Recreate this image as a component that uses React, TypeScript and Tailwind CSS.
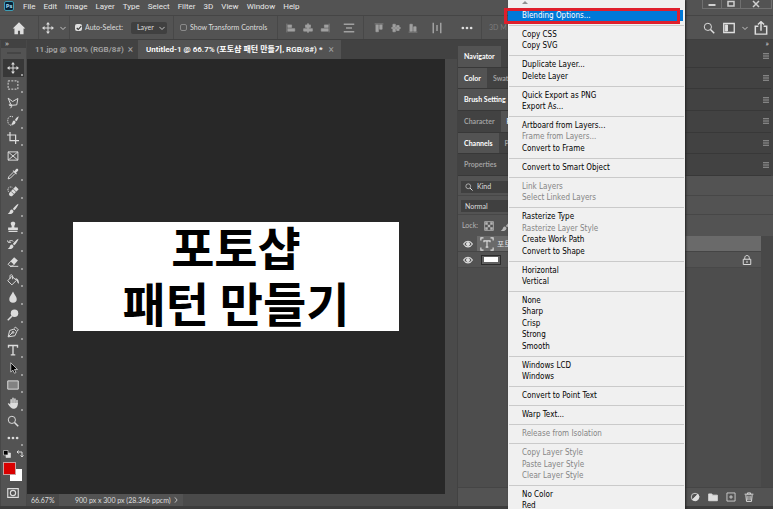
import React from "react";

type IconProps = { children: React.ReactNode; className?: string };

function Icon({ children, className = "size-3.5" }: IconProps) {
  return (
    <svg viewBox="0 0 16 16" className={`shrink-0 ${className}`} fill="none" stroke="currentColor" strokeWidth="1.3" aria-hidden="true">
      {children}
    </svg>
  );
}

const moveShape = (
  <>
    <path d="M8 2v12M2 8h12" />
    <path fill="currentColor" stroke="none" d="M8 0l2.6 3.4H5.4zM8 16l2.6-3.4H5.4zM0 8l3.4-2.6v5.2zM16 8l-3.4-2.6v5.2z" />
  </>
);
const magnifier = (
  <>
    <circle cx="6.5" cy="6.5" r="4.8" />
    <path d="M10 10l5 5" strokeWidth="2" />
  </>
);
const brushShape = (
  <path fill="currentColor" stroke="none" d="M15.4 1c-2.5 1-6 4.3-7.6 6.9l1.9 1.8C12 7.8 14.7 4 15.4 1zM6.900 8.800c-2.600-.2-3 2.300-3.600 3.600-.5 1-1.300 1.500-2.300 1.700 2.600 1.500 7.300.8 7.700-3.400z" />
);
const dots = (
  <g fill="currentColor" stroke="none">
    <circle cx="2.5" cy="8" r="1.8" />
    <circle cx="8" cy="8" r="1.8" />
    <circle cx="13.5" cy="8" r="1.8" />
  </g>
);

type Tool = { name: string; shape: React.ReactNode; more: boolean };

const tools: Tool[] = [
  { name: "Move", more: true, shape: moveShape },
  { name: "Marquee", more: true, shape: <path strokeDasharray="2.6 1.7" d="M1.5 2.5h13v11h-13z" /> },
  { name: "Polygonal Lasso", more: true, shape: <path d="M5 10L1.5 1.5l6 4.500 7-4-1.500 8.500-6 .5-2.500-1.500c-2 0-2.500 2 0 2s2 1.500 0 3.500M7 11l-3 .5" /> },
  {
    name: "Quick Selection", more: true, shape: (
      <>
        <path strokeDasharray="1.5 1" d="M8 2.5C4 .5 1 3 1 7.500S4 15 7.500 13" />
        <path fill="currentColor" stroke="none" d="M15.5 1.5c-2 1-4 3-5 5l1.800 1.800c1.900-1.900 3.200-4.800 3.200-6.800zM9.700 7.300c-2.200.2-2.200 2.200-2.700 3.500L5.500 12.500c2.500 1 6 .2 6-3.500z" />
      </>
    ),
  },
  { name: "Crop", more: true, shape: <path strokeWidth="1.6" d="M4 0v11.500h12M0 4h11.500V16" /> },
  { name: "Frame", more: false, shape: <path d="M1.5 2.5h13v11h-13zM1.5 2.5l13 11M14.5 2.5l-13 11" /> },
  {
    name: "Eyedropper", more: true, shape: (
      <>
        <path d="M8.5 5.500L2.500 11.500 1.500 14.500l3-1 6-6" />
        <path fill="currentColor" stroke="none" d="M7.500 4l1-1 1.400 1.200 2-2.500c2-1.800 4.200.5 2.500 2.400L12 6.300l1.200 1.300-1.100 1z" />
      </>
    ),
  },
  {
    name: "Healing Brush", more: true, shape: (
      <>
        <path strokeDasharray="1.5 1" d="M2 9C0 5 2 1.500 7 3" />
        <path fill="currentColor" stroke="none" d="M11.500 1.500l4 4-8.500 9c-2.500 1.500-5.500-1.500-4-4z" />
        <path className="stroke-[#535353]" strokeWidth="1" d="M8.500 5.500l4 4M5.500 8.500l4 4" />
      </>
    ),
  },
  { name: "Brush", more: true, shape: brushShape },
  { name: "Clone Stamp", more: true, shape: <path fill="currentColor" stroke="none" d="M8 1c3.800 0 3.400 3.200 2 5-.4.7-.4 1.800 0 2.500h4.500V12h-13V8.500H6c.4-.7.4-1.800 0-2.500C4.600 4.200 4.200 1 8 1zM2 13h12v1.800H2z" /> },
  {
    name: "History Brush", more: true, shape: (
      <>
        {brushShape}
        <path d="M2 5.500C4 2.500 6.500 3 8.500 4.500M0 3l2 3 3.500-.5" />
      </>
    ),
  },
  {
    name: "Eraser", more: true, shape: (
      <>
        <path fill="currentColor" stroke="none" d="M9.500 1.500l5 4.500-5 5.500-5-4.500z" />
        <path d="M5 7l-3.500 4 2.500 2.500h3l2.500-2.500M4 13.800h11" />
      </>
    ),
  },
  {
    name: "Paint Bucket", more: true, shape: (
      <>
        <path d="M6.500 3L1 9l5.500 5.500 6-6zM4 6.500V3c0-3 3.500-2.500 3.500 0v4" />
        <path fill="currentColor" stroke="none" d="M11 5.500c3 0 5 2 5 7.500-1.500-.5-2.500-2-2.700-4z" />
      </>
    ),
  },
  { name: "Blur", more: true, shape: <path fill="currentColor" stroke="none" d="M8 .5c1.500 4 5 6.500 5 10A5 5 0 0 1 3 10.500c0-3.500 3.500-6 5-10z" /> },
  {
    name: "Dodge", more: true, shape: (
      <>
        <circle cx="10" cy="5.8" r="5" fill="currentColor" stroke="none" />
        <path strokeWidth="1.9" d="M6.500 9.500L1 15" />
      </>
    ),
  },
  {
    name: "Pen", more: true, shape: (
      <>
        <path d="M1.500 14.500l2-8.500L9.500 4l3.500 3.500-2.500 5.500zM1.500 14.500l6-6M9.500 3l2-1.500 3.500 3.500-1.500 2" />
        <circle cx="8" cy="8.5" r="1.2" />
      </>
    ),
  },
  { name: "Type", more: true, shape: <path strokeWidth="1.8" d="M2 5V2h12v3M8 2v12.500M5 14.500h6" /> },
  { name: "Path Selection", more: true, shape: <path className="fill-black" strokeWidth="1" d="M5 1v12.500l2.700-2.800L10 15l2-1-2-4h4z" /> },
  { name: "Rectangle", more: true, shape: <path className="fill-[#828282]" d="M1 2.500h14v11H1z" /> },
  {
    name: "Hand", more: true, shape: (
      <>
        <path fill="currentColor" stroke="none" d="M4.500 8h10c0 4-1 7-5 7.500-3 .5-5-1.500-8.500-6.500 1-1.500 2-.5 3.500 1z" />
        <path strokeWidth="1.9" strokeLinecap="round" d="M5.500 9V3.500M8 9V1.500M10.600 9V2.500M13.300 9V4.500" />
      </>
    ),
  },
  { name: "Zoom", more: false, shape: magnifier },
  { name: "Edit Toolbar", more: true, shape: dots },
];

const menus = ["File", "Edit", "Image", "Layer", "Type", "Select", "Filter", "3D", "View", "Window", "Help"];

const contextMenu: { label: string; off?: boolean }[][] = [
  [{ label: "Blending Options..." }],
  [{ label: "Copy CSS" }, { label: "Copy SVG" }],
  [{ label: "Duplicate Layer..." }, { label: "Delete Layer" }],
  [{ label: "Quick Export as PNG" }, { label: "Export As..." }],
  [{ label: "Artboard from Layers..." }, { label: "Frame from Layers...", off: true }, { label: "Convert to Frame" }],
  [{ label: "Convert to Smart Object" }],
  [{ label: "Link Layers", off: true }, { label: "Select Linked Layers", off: true }],
  [{ label: "Rasterize Type" }, { label: "Rasterize Layer Style", off: true }, { label: "Create Work Path" }, { label: "Convert to Shape" }],
  [{ label: "Horizontal" }, { label: "Vertical" }],
  [{ label: "None" }, { label: "Sharp" }, { label: "Crisp" }, { label: "Strong" }, { label: "Smooth" }],
  [{ label: "Windows LCD" }, { label: "Windows" }],
  [{ label: "Convert to Point Text" }],
  [{ label: "Warp Text..." }],
  [{ label: "Release from Isolation", off: true }],
  [{ label: "Copy Layer Style", off: true }, { label: "Paste Layer Style", off: true }, { label: "Clear Layer Style", off: true }],
  [{ label: "No Color" }, { label: "Red" }],
];

const panels: { tabs: string[]; active: number }[] = [
  { tabs: ["Navigator"], active: 0 },
  { tabs: ["Color", "Swat"], active: 0 },
  { tabs: ["Brush Setting"], active: 0 },
  { tabs: ["Character", "P"], active: 1 },
  { tabs: ["Channels", "P"], active: 0 },
  { tabs: ["Properties"], active: -1 },
];

const aligns: { name: string; shape: React.ReactNode }[] = [
  { name: "Align left edges", shape: <path d="M1.500 1v14M3 3h6v4H3zM3 9h11v4H3z" /> },
  { name: "Align horizontal centers", shape: <path d="M7.300 1h1.400v14H7.300zM4 3h8v4H4zM1 9h14v4H1z" /> },
  { name: "Align right edges", shape: <path d="M14.500 1v14M7 3h6v4H7zM2 9h11v4H2z" /> },
];
const verticals: { name: string; shape: React.ReactNode }[] = [
  { name: "Align top edges", shape: <path d="M1 1.500h14M3 3v11h4V3zM9 3v7h4V3z" /> },
  { name: "Align vertical centers", shape: <path d="M1 7.300h14v1.400H1zM3 2v12h4V2zM9 4v8h4V4z" /> },
  { name: "Align bottom edges", shape: <path d="M1 14.500h14M3 2v11h4V2zM9 6v7h4V6z" /> },
];

function Chevron() {
  return (
    <Icon className="size-1.5">
      <path d="M1 5l7 7 7-7" strokeWidth="2.2" />
    </Icon>
  );
}

function Rule() {
  return <div className="h-full w-px shrink-0 bg-[#484848]" />;
}

function MenuBar() {
  return (
    <header className="flex h-[15px] shrink-0 items-start bg-[#535353] pl-1">
      <div className="mt-px flex size-2.5 items-center justify-center rounded-xs border border-[#3d9db5] bg-[#062338] text-[6px] font-bold text-[#a5dcf5]">Ps</div>
      <nav className="flex h-[13px] items-center gap-2 pl-[9px] font-['Roboto',sans-serif] text-[#e8e8e8]">
        {menus.map((m) => (
          <button key={m} type="button">{m}</button>
        ))}
      </nav>
      <div className="mr-px ml-auto flex h-[9px] border-b border-l border-[#707070] text-[#d0d0d0]">
        <button type="button" aria-label="Minimize" className="flex w-[19px] items-center justify-center border-r border-[#707070]">
          <Icon className="size-2"><path d="M1 10h14" strokeWidth="4" /></Icon>
        </button>
        <button type="button" aria-label="Restore" className="flex w-[19px] items-center justify-center border-r border-[#707070]">
          <Icon className="size-2"><path d="M2 3h12v9H2z" strokeWidth="3" /></Icon>
        </button>
        <button type="button" aria-label="Close" className="flex w-[31px] items-center justify-center border-r border-[#707070]">
          <Icon className="size-2"><path d="M2 2l12 12M14 2L2 14" strokeWidth="3" /></Icon>
        </button>
      </div>
    </header>
  );
}

function OptionsBar() {
  return (
    <div className="flex h-6 shrink-0 items-center border-t border-[#454545] bg-[#535353] font-['Lato',sans-serif] text-[7px] text-[#dedede]">
      <button type="button" aria-label="Home" className="flex w-[38px] justify-center">
        <Icon><path fill="currentColor" stroke="none" d="M8 1.500L.8 8.500h2V15h4v-4h2.400v4h4V8.500h2z" /></Icon>
      </button>
      <Rule />
      <button type="button" aria-label="Move tool presets" className="flex w-[30px] items-center justify-center gap-1.5">
        <Icon className="size-3">{moveShape}</Icon>
        <Chevron />
      </button>
      <Rule />
      <label className="flex shrink-0 items-center gap-[3px] pl-[5px] whitespace-nowrap">
        <input type="checkbox" defaultChecked className="peer sr-only" />
        <span className="flex size-[7px] items-center justify-center rounded-xs bg-[#dedede] text-[#333]">
          <Icon className="size-1.5"><path d="M2 8l4 4 8-9" strokeWidth="3" /></Icon>
        </span>
        <span className="w-[46px]">Auto-Select:</span>
      </label>
      <div className="grid shrink-0 items-center">
        <select aria-label="Auto-select target" className="col-start-1 row-start-1 h-3 w-9 appearance-none rounded-xs bg-[#404040] pl-1.5">
          <option>Layer</option>
        </select>
        <span className="pointer-events-none col-start-1 row-start-1 mr-0.5 justify-self-end"><Chevron /></span>
      </div>
      <div className="w-[6px] shrink-0" />
      <Rule />
      <label className="flex w-[103px] shrink-0 items-center gap-[3px] pl-1.5 whitespace-nowrap">
        <input type="checkbox" className="size-[7px] shrink-0 appearance-none rounded-xs border border-[#8a8a8a]" />
        Show Transform Controls
      </label>
      <Rule />
      <div className="flex items-center gap-[7px] px-2 text-[#a0a0a0]">
        {aligns.map((a) => (
          <button key={a.name} type="button" aria-label={a.name}><Icon className="size-2.5 fill-current stroke-1">{a.shape}</Icon></button>
        ))}
        <button type="button" aria-label="Distribute" className="pl-1.5">
          <Icon className="size-3"><path d="M1 3h14M1 13h14M4 8h8" strokeWidth="2" /></Icon>
        </button>
      </div>
      <Rule />
      <div className="flex items-center gap-[7px] px-2.5 text-[#a0a0a0]">
        {verticals.map((a) => (
          <button key={a.name} type="button" aria-label={a.name}><Icon className="size-2.5 fill-current stroke-1">{a.shape}</Icon></button>
        ))}
        <button type="button" aria-label="Distribute horizontally" className="pl-1.5">
          <Icon className="size-3"><path d="M3 1v14M13 1v14M8 4v8" strokeWidth="2" /></Icon>
        </button>
      </div>
      <button type="button" aria-label="More options" className="flex w-7 justify-center"><Icon className="size-3">{dots}</Icon></button>
      <Rule />
      <span className="pl-[7px] whitespace-nowrap text-[#7c7c7c]">3D M</span>
      <div className="ml-auto flex items-center gap-1.5 pr-[5px]">
        <button type="button" aria-label="Search" className="mr-0.5"><Icon className="size-3">{magnifier}</Icon></button>
        <button type="button" aria-label="Workspace" className="flex items-center gap-[7px]">
          <Icon className="size-3"><path d="M1 2h14v12H1z" strokeWidth="1.8" /><path d="M3 4h3v8H3z" fill="currentColor" /></Icon>
          <Chevron />
        </button>
        <button type="button" aria-label="Share"><Icon><path d="M5 6H1.500v9h13V6H11M8 11V1M4.500 4L8 .8 11.500 4" strokeWidth="1.7" /></Icon></button>
      </div>
    </div>
  );
}

function Toolbar() {
  return (
    <aside className="flex w-[27px] shrink-0 flex-col border-r border-l border-[#484848] bg-[#535353] text-[#dcdcdc]">
      <div className="h-2 bg-[#424242] pl-1 leading-[5px]">»</div>
      <div className="flex h-[11px] items-start justify-center pt-1"><div className="h-0.5 w-3.5 bg-[#454545]" /></div>
      <div className="flex h-[388px] flex-col">
        {tools.map((t, i) => (
          <button key={t.name} type="button" aria-label={t.name} className={`relative mx-0.5 flex min-h-0 flex-1 items-center justify-center pr-px ${i === 0 ? "bg-[#383838]" : ""}`}>
            <Icon className="size-3">{t.shape}</Icon>
            {t.more && <span className="absolute right-px bottom-px size-0.5 bg-[#9a9a9a]" />}
          </button>
        ))}
      </div>
      <div className="flex h-[11px] items-center justify-between px-0.5 pt-0.5">
        <Icon className="size-2"><path d="M6 6h9v9H6z" fill="currentColor" /><path d="M1 1h9v9H1z" className="fill-black" /></Icon>
        <Icon className="size-2"><path d="M3 4h9v9M5 1L2 4l3 3M9 11l3 3 3-3" strokeWidth="2" /></Icon>
      </div>
      <div className="grid h-[23px] w-[21px] grid-cols-1 pt-1 pl-0.5">
        <button type="button" aria-label="Background color" className="col-start-1 row-start-1 size-3 self-end justify-self-end bg-white" />
        <button type="button" aria-label="Foreground color" className="z-10 col-start-1 row-start-1 size-[13px] border border-[#c9a0a0] bg-[#d90000]" />
      </div>
      <button type="button" aria-label="Quick mask" className="flex h-[19px] items-end justify-center pr-px">
        <Icon><path d="M2 3h12v10H2z" /><circle cx="8" cy="8" r="3" /></Icon>
      </button>
    </aside>
  );
}

function Document() {
  return (
    <main className="flex min-w-0 flex-1 flex-col">
      <div className="flex h-[19px] shrink-0 bg-[#424242] font-['Roboto','Noto_Sans_CJK_KR',sans-serif] font-semibold whitespace-nowrap" role="tablist">
        <button type="button" role="tab" aria-selected="false" className="flex w-[111px] items-center gap-1 pl-2 text-[#a5a5a5]">
          11.jpg @ 100% (RGB/8#) <span className="text-[10px] font-normal">×</span>
        </button>
        <button type="button" role="tab" aria-selected="true" className="flex w-[203px] items-center gap-1.5 bg-[#535353] pl-2 text-white">
          Untitled-1 @ 66.7% (포토샵 패턴 만들기, RGB/8#) * <span className="text-[10px] font-normal text-[#a0a0a0]">×</span>
        </button>
      </div>
      <div className="flex min-h-0 flex-1">
        <div className="flex flex-1 items-center justify-center bg-[#282828]">
          <div className="w-[326px] bg-white pb-px text-center font-['Noto_Sans_CJK_KR',sans-serif] text-[47px] leading-[56px] font-bold text-black">
            <p className="-mt-1">포토샵</p>
            <p>패턴 만들기</p>
          </div>
        </div>
        <div className="w-3 bg-[#4a4a4a]" />
      </div>
      <footer className="flex h-3 shrink-0 items-center bg-[#4a4a4a] font-['Liberation_Sans_Narrow','Lato',sans-serif] text-[7px] text-[#dedede]">
        <span className="w-8 pl-1 font-['Lato',sans-serif]">66.67%</span>
        <span className="flex h-full w-[124px] items-center justify-between bg-[#535353] pr-1 pl-4 whitespace-nowrap">
          900 px x 300 px (28.346 ppcm)
          <Icon className="size-1.5"><path d="M5 1l6 7-6 7" strokeWidth="2" /></Icon>
        </span>
      </footer>
    </main>
  );
}

function Burger() {
  return <Icon className="ml-auto size-1.5 text-[#9a9a9a]"><path d="M0 2h16M0 8h16M0 14h16" strokeWidth="3" /></Icon>;
}

function Eye() {
  return (
    <Icon className="size-2.5">
      <path d="M1 8c3.500-6 10.500-6 14 0-3.500 6-10.500 6-14 0z" strokeWidth="1.8" />
      <circle cx="8" cy="8" r="2.6" fill="currentColor" />
    </Icon>
  );
}

function Panels() {
  return (
    <aside className="flex w-[316px] shrink-0 flex-col border-l border-[#424242] bg-[#4d4d4d] font-['Lato',sans-serif] text-[7px] text-[#dedede]">
      <div className="flex h-1.5 items-center justify-end bg-[#424242] pr-1 text-[8px] leading-[6px]">»</div>
      <div className="flex h-[130px] shrink-0 flex-col bg-[#424242] pr-0.5">
        {panels.map((p) => (
          <div key={p.tabs[0]} className="flex min-h-0 flex-1 items-stretch border-b border-[#383838] pr-0.5" role="tablist">
            {p.tabs.map((t, i) => (
              <button key={t} type="button" role="tab" aria-selected={i === p.active} className={`px-1.5 font-bold whitespace-nowrap ${i === p.active ? "bg-[#535353] text-white" : "text-[#a0a0a0]"}`}>
                {t}
              </button>
            ))}
            <span className="ml-auto flex items-center"><Burger /></span>
          </div>
        ))}
      </div>
      <div className="flex h-5 shrink-0 items-center border-b border-[#474747] bg-[#535353] pt-0.5 pl-[3px]">
        <div className="flex h-3 w-20 items-center gap-1 bg-[#404040] pl-1">
          <Icon className="size-2">{magnifier}</Icon>
          <select aria-label="Filter layers by" className="appearance-none"><option>Kind</option></select>
        </div>
      </div>
      <div className="flex h-[19px] shrink-0 items-center border-b border-[#474747] bg-[#535353] pt-0.5 pl-[3px]">
        <select aria-label="Blend mode" className="h-3 w-20 appearance-none bg-[#404040] pl-1"><option>Normal</option></select>
      </div>
      <div className="flex h-[21px] shrink-0 items-center gap-1.5 bg-[#535353] pl-1 text-[#b5b5b5]">
        Lock:
        <Icon className="size-2.5"><path d="M1 1h14v14H1z" /><path fill="currentColor" stroke="none" d="M2 2h4v4H2zM10 2h4v4h-4zM6 6h4v4H6zM2 10h4v4H2zM10 10h4v4h-4z" /></Icon>
        <Icon className="size-3">{brushShape}</Icon>
      </div>
      <div className="min-h-0 flex-1 bg-[#484848] pr-3">
        <div className="h-full bg-[#4d4d4d]">
          <div className="flex h-4 items-center border-b border-[#454545] bg-[#6a6a6a]">
            <button type="button" aria-label="Toggle text layer" className="flex h-full w-[19px] items-center justify-center bg-[#535353]"><Eye /></button>
            <span className="flex w-[20px] justify-center">
              <Icon className="size-3.5"><path d="M1 4V1h3M12 1h3v3M15 12v3h-3M4 15H1v-3M4.500 6V4.500h7V6M8 4.500v7M6.500 11.500h3" /></Icon>
            </span>
            <span className="font-['Noto_Sans_CJK_KR',sans-serif] text-[8px]">포토</span>
          </div>
          <div className="flex h-4 items-center border-b border-[#484848] bg-[#535353]">
            <button type="button" aria-label="Toggle background layer" className="flex h-full w-[19px] items-center justify-center"><Eye /></button>
            <span className="ml-1 flex h-2.5 w-5 items-center justify-center border border-[#2c2c2c] bg-[#606060]"><span className="h-[5px] w-3.5 bg-white" /></span>
            <Icon className="mr-2 ml-auto size-3"><path d="M3 7h10v7H3zM5 7V5c0-4 6-4 6 0v2M8 9v3" /></Icon>
          </div>
        </div>
      </div>
      <div className="flex h-[19px] shrink-0 items-center justify-end gap-2 border-t border-[#454545] bg-[#535353] pr-[19px]">
        <button type="button" aria-label="Adjustment layer"><Icon className="size-2.5"><circle cx="8" cy="8" r="6" /><path d="M12.500 3.500A6 6 0 0 1 4 12z" fill="currentColor" /></Icon></button>
        <button type="button" aria-label="New group"><Icon className="size-2.5"><path d="M1 3h5l1.500 2H15v9H1z" fill="currentColor" /></Icon></button>
        <button type="button" aria-label="New layer"><Icon className="size-2.5"><path d="M1.500 1.500h13v13h-13zM8 5v6M5 8h6" /></Icon></button>
        <button type="button" aria-label="Delete"><Icon className="size-2.5"><path d="M1 3.500h14M5.500 3V1.500h5V3M3 5l1 10h8l1-10M6.300 6v7M9.700 6v7" strokeWidth="1.6" /></Icon></button>
      </div>
    </aside>
  );
}

function LayerMenu() {
  return (
    <div role="menu" className="absolute top-0 -bottom-[3px] left-[508px] flex w-[177px] flex-col bg-[#f0f0f0] font-['DejaVu_Sans_Condensed','DejaVu_Sans',sans-serif] text-black shadow-[1px_0_2px_#222]">
      <div className="flex h-2.5 shrink-0 items-start pt-px pl-3.5">
        <svg viewBox="0 0 8 4" className="h-[3px] w-1.5 fill-[#909090]" aria-hidden="true"><path d="M4 0l4 4H0z" /></svg>
      </div>
      {contextMenu.map((group, g) => (
        <React.Fragment key={group[0].label}>
          {g > 0 && <div role="separator" className="mx-px flex min-h-0 grow-[15] basis-0 items-center"><div className="h-px w-full bg-[#cacaca]" /></div>}
          {group.map((item) => (
            <button
              key={item.label}
              type="button"
              role="menuitem"
              disabled={item.off}
              className={`mr-0.5 flex min-h-0 grow-[23] basis-0 items-center pl-3.5 whitespace-nowrap ${g === 0 ? "bg-[#0078d7] text-white" : ""} ${item.off ? "text-[#858585]" : ""}`}
            >
              {item.label}
            </button>
          ))}
        </React.Fragment>
      ))}
      <div className="pointer-events-none absolute top-2 -left-1 h-4 w-[176px] border-3 border-[#df1f2c]" />
    </div>
  );
}

export default function App() {
  return (
    <div className="relative flex h-screen flex-col overflow-hidden bg-[#3c3c3c] font-['Open_Sans','Noto_Sans_CJK_KR',sans-serif] text-[8px] leading-none">
      <MenuBar />
      <OptionsBar />
      <div className="flex min-h-0 flex-1 border-t border-[#3f3f3f] pb-[3px]">
        <Toolbar />
        <Document />
        <Panels />
      </div>
      <LayerMenu />
    </div>
  );
}
